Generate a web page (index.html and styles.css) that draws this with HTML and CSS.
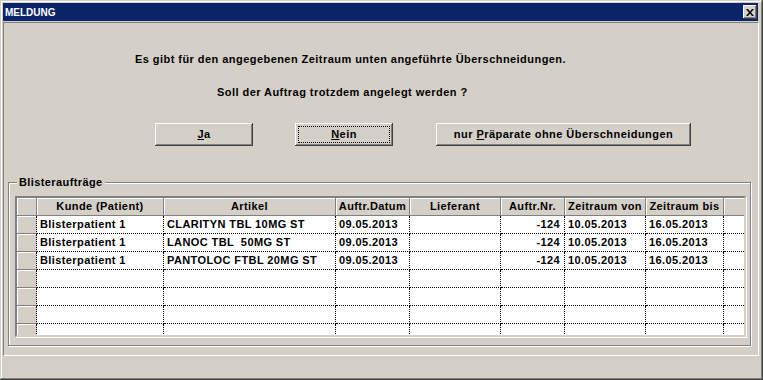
FILE: index.html
```html
<!DOCTYPE html>
<html lang="de">
<head>
    <meta charset="UTF-8">
    <title>Meldung</title>
    <link rel="stylesheet" href="styles.css">
</head>
<body>
    <div class="window">
        <div class="titlebar">
            <span class="title">MELDUNG</span>
            <span class="close-btn">
                <svg width="8" height="7" viewBox="0 0 8 7"><path d="M0 0h2l2 2.4 2-2.4h2l-3 3.5 3 3.5h-2l-2-2.4-2 2.4h-2l3-3.5z" fill="#000"/></svg>
            </span>
        </div>

        <div class="panel">
            <p class="msg msg-first">Es gibt für den angegebenen Zeitraum unten angeführte Überschneidungen.</p>
            <p class="msg msg-second">Soll der Auftrag trotzdem angelegt werden ?</p>

            <div class="buttons">
                <div class="btn btn-ja"><u>J</u>a</div>
                <div class="btn btn-nein focused"><u>N</u>ein</div>
                <div class="btn btn-nur">nur <u>P</u>räparate ohne Überschneidungen</div>
            </div>

            <div class="group">
                <span class="group-label">Blisteraufträge</span>
                <div class="grid">
                    <div class="row head">
                        <div class="hcell"></div>
                        <div class="hcell">Kunde (Patient)</div>
                        <div class="hcell">Artikel</div>
                        <div class="hcell">Auftr.Datum</div>
                        <div class="hcell">Lieferant</div>
                        <div class="hcell">Auftr.Nr.</div>
                        <div class="hcell">Zeitraum von</div>
                        <div class="hcell">Zeitraum bis</div>
                        <div class="hcell last"></div>
                    </div>
                    <div class="row">
                        <div class="sel"></div>
                        <div class="cell">Blisterpatient 1</div>
                        <div class="cell">CLARITYN TBL 10MG ST</div>
                        <div class="cell">09.05.2013</div>
                        <div class="cell"></div>
                        <div class="cell num">-124</div>
                        <div class="cell">10.05.2013</div>
                        <div class="cell">16.05.2013</div>
                        <div class="cell last"></div>
                    </div>
                    <div class="row">
                        <div class="sel"></div>
                        <div class="cell">Blisterpatient 1</div>
                        <div class="cell">LANOC TBL  50MG ST</div>
                        <div class="cell">09.05.2013</div>
                        <div class="cell"></div>
                        <div class="cell num">-124</div>
                        <div class="cell">10.05.2013</div>
                        <div class="cell">16.05.2013</div>
                        <div class="cell last"></div>
                    </div>
                    <div class="row">
                        <div class="sel"></div>
                        <div class="cell">Blisterpatient 1</div>
                        <div class="cell">PANTOLOC FTBL 20MG ST</div>
                        <div class="cell">09.05.2013</div>
                        <div class="cell"></div>
                        <div class="cell num">-124</div>
                        <div class="cell">10.05.2013</div>
                        <div class="cell">16.05.2013</div>
                        <div class="cell last"></div>
                    </div>
                    <div class="row">
                        <div class="sel"></div>
                        <div class="cell"></div><div class="cell"></div><div class="cell"></div><div class="cell"></div>
                        <div class="cell"></div><div class="cell"></div><div class="cell"></div><div class="cell last"></div>
                    </div>
                    <div class="row">
                        <div class="sel"></div>
                        <div class="cell"></div><div class="cell"></div><div class="cell"></div><div class="cell"></div>
                        <div class="cell"></div><div class="cell"></div><div class="cell"></div><div class="cell last"></div>
                    </div>
                    <div class="row">
                        <div class="sel"></div>
                        <div class="cell"></div><div class="cell"></div><div class="cell"></div><div class="cell"></div>
                        <div class="cell"></div><div class="cell"></div><div class="cell"></div><div class="cell last"></div>
                    </div>
                    <div class="row">
                        <div class="sel"></div>
                        <div class="cell"></div><div class="cell"></div><div class="cell"></div><div class="cell"></div>
                        <div class="cell"></div><div class="cell"></div><div class="cell"></div><div class="cell last"></div>
                    </div>
                </div>
            </div>
        </div>
    </div>
</body>
</html>
```

FILE: styles.css
```css
* {
    margin: 0;
    padding: 0;
    box-sizing: border-box;
}

body {
    background-color: #d4d0c8;
    font-family: "Liberation Sans", Arial, sans-serif;
    font-size: 11px;
    font-weight: bold;
    letter-spacing: 0.4px;
    color: #000;
}

.window {
    width: 763px;
    height: 380px;
    padding: 3px 4px 0 3px;
    background: #d4d0c8;
    box-shadow: inset -1px -1px #404040, inset 1px 1px #d4d0c8,
                inset -2px -2px #808080, inset 2px 2px #fff;
    overflow: hidden;
}

.titlebar {
    display: flex;
    align-items: center;
    justify-content: space-between;
    height: 18px;
    margin-right: 1px;
    background: #0a246a;
    color: #fff;
}

.title {
    font-size: 10px;
    letter-spacing: 0;
    padding: 1px 0 0 2px;
}

.close-btn {
    display: flex;
    align-items: center;
    justify-content: center;
    width: 14px;
    height: 14px;
    margin-right: 1px;
    background: #d4d0c8;
    box-shadow: inset -1px -1px #404040, inset 1px 1px #fff,
                inset -2px -2px #808080;
}

.close-btn svg {
    display: block;
    margin-left: -1px;
}

/* client area */
.panel {
    height: 334px;
    margin-top: 1px;
    border: 1px solid;
    border-color: #808080 #fff #fff #808080;
    padding-top: 30px;
}

.msg {
    line-height: 13px;
    letter-spacing: 0.45px;
}

.msg-first {
    padding-left: 131px;
}

.msg-second {
    padding-left: 213px;
    margin-top: 20px;
}

.buttons {
    display: flex;
    margin-top: 24px;
    height: 23px;
}

.btn {
    position: relative;
    height: 23px;
    line-height: 23px;
    text-align: center;
    letter-spacing: 0.45px;
    background: #d4d0c8;
    box-shadow: inset -1px -1px #404040, inset 1px 1px #fff,
                inset -2px -2px #808080, inset 2px 2px #d4d0c8;
}

.btn-ja {
    width: 98px;
    margin-left: 151px;
}

.btn-nein {
    width: 98px;
    margin-left: 42px;
}

.btn-nur {
    width: 255px;
    margin-left: 43px;
}

.btn.focused::after {
    content: "";
    position: absolute;
    top: 3px;
    left: 3px;
    right: 3px;
    bottom: 3px;
    border: 1px dotted #000;
}

/* group box */
.group {
    position: relative;
    width: 743px;
    height: 164px;
    margin: 36px 0 0 4px;
    padding: 13px 4px 0 6px;
    border: 1px solid #808080;
    box-shadow: inset 1px 1px #fff, 1px 1px #fff;
}

.group-label {
    position: absolute;
    top: -7px;
    left: 8px;
    padding: 0 2px 0 2px;
    line-height: 13px;
    background: #d4d0c8;
}

.grid {
    height: 141px;
    background: #fff;
    border: 2px solid;
    border-color: #808080 #d4d0c8 #d4d0c8 #808080;
    box-shadow: inset 1px 1px #404040, 1px 1px #fff;
    overflow: hidden;
}

.row {
    display: grid;
    grid-template-columns: 20px 127px 172px 74px 91px 64px 81px 78px 1fr;
    height: 18px;
}

.hcell,
.cell,
.sel {
    height: 18px;
    line-height: 17px;
    white-space: pre;
    overflow: hidden;
}

.hcell {
    text-align: center;
    background: #d4d0c8;
    border-right: 1px solid #808080;
    border-bottom: 1px solid #808080;
    box-shadow: inset 1px 1px #fff;
}

.hcell.last {
    border-right: none;
}

.sel {
    background: #d4d0c8;
    border-right: 1px dotted #000;
    border-bottom: 1px solid #808080;
    box-shadow: inset 1px 1px #fff;
}

.cell {
    padding: 0 3px;
    border-right: 1px dotted #000;
    border-bottom: 1px dotted #000;
}

.cell.last {
    border-right: none;
}

.cell.num {
    text-align: right;
    padding-right: 4px;
}
```
